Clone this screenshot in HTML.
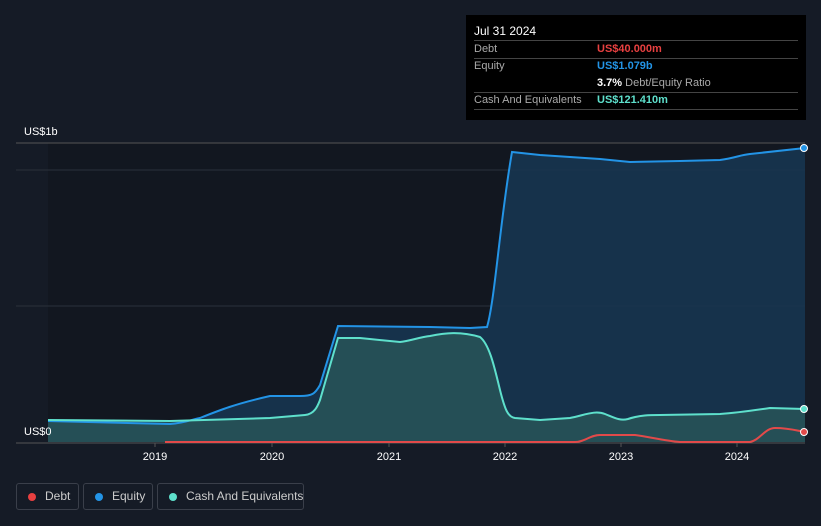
<!DOCTYPE html><html><head><style>
body{margin:0;background:#151b26;font-family:"Liberation Sans",sans-serif;width:821px;height:526px;overflow:hidden;position:relative}
.tt{position:absolute;left:466px;top:15px;width:340px;height:105px;background:#000;color:#fff;font-size:11px}
.row{position:absolute;left:8px;right:8px;height:17px;border-bottom:1px solid #444;line-height:17px}
.row span{position:absolute;left:123px;font-weight:bold}
.lg{position:absolute;top:483px;height:27px;border:1px solid #3a3f4a;border-radius:3px;color:#ccc;font-size:12px;line-height:25px;box-sizing:border-box;padding-left:28px;white-space:nowrap}
.lg i{position:absolute;left:11px;top:9px;width:8px;height:8px;border-radius:50%}
</style></head><body>
<svg width="821" height="526" style="position:absolute;left:0;top:0">
<rect x="48" y="143" width="757" height="299" fill="#121720"/>
<line x1="16" y1="143" x2="805" y2="143" stroke="#555" stroke-width="1"/>
<line x1="16" y1="170" x2="805" y2="170" stroke="#2a303b"/>
<line x1="16" y1="306" x2="805" y2="306" stroke="#2a303b"/>
<line x1="16" y1="443" x2="805" y2="443" stroke="#555"/>
<path d="M48,421 L170,424 C185,423 190,420 200,418 C220,410 235,404 270,396 L300,396 C312,396 315,394 320,385 L338,326 L430,327 L470,328 L487,327 C495,300 500,220 512,152 L540,155 L600,159 L630,162 L680,161 L720,160 C735,158 740,155 750,154 L805,148 L805,442 L48,442Z" fill="#173550" opacity="0.9"/>
<path d="M48,420 L170,421 L270,418 L305,415 C315,414 318,405 320,400 L338,338 L360,338 L400,342 C410,341 420,337 430,336 C445,333 460,331 480,337 C490,345 495,370 500,390 C505,410 508,417 515,418 L540,420 L570,418 C585,415 595,410 605,414 C615,418 620,421 628,419 C640,415 650,415 660,415 L720,414 C735,413 750,411 770,408 L805,409 L805,442 L48,442Z" fill="#2b5a5a" opacity="0.75"/>
<path d="M48,421 L170,424 C185,423 190,420 200,418 C220,410 235,404 270,396 L300,396 C312,396 315,394 320,385 L338,326 L430,327 L470,328 L487,327 C495,300 500,220 512,152 L540,155 L600,159 L630,162 L680,161 L720,160 C735,158 740,155 750,154 L805,148" fill="none" stroke="#2394e6" stroke-width="2"/>
<path d="M48,420 L170,421 L270,418 L305,415 C315,414 318,405 320,400 L338,338 L360,338 L400,342 C410,341 420,337 430,336 C445,333 460,331 480,337 C490,345 495,370 500,390 C505,410 508,417 515,418 L540,420 L570,418 C585,415 595,410 605,414 C615,418 620,421 628,419 C640,415 650,415 660,415 L720,414 C735,413 750,411 770,408 L805,409" fill="none" stroke="#5ee0cc" stroke-width="2"/>
<path d="M165,442 L575,442 C585,442 590,435 600,435 L635,435 C650,437 665,441 680,442 L750,442 C760,440 765,428 775,428 C790,428 798,431 805,432" fill="none" stroke="#e24a4a" stroke-width="2"/>
<circle cx="804" cy="148" r="3.5" fill="#2394e6" stroke="#fff" stroke-width="1"/>
<circle cx="804" cy="409" r="3.5" fill="#5ee0cc" stroke="#fff" stroke-width="1"/>
<circle cx="804" cy="432" r="3.5" fill="#e24a4a" stroke="#fff" stroke-width="1"/>
<g fill="#fff" font-size="11" text-anchor="middle"><text x="155" y="460">2019</text><text x="272" y="460">2020</text><text x="389" y="460">2021</text><text x="505" y="460">2022</text><text x="621" y="460">2023</text><text x="737" y="460">2024</text></g>
<g stroke="#555"><line x1="155" y1="443" x2="155" y2="447"/><line x1="272" y1="443" x2="272" y2="447"/><line x1="389" y1="443" x2="389" y2="447"/><line x1="505" y1="443" x2="505" y2="447"/><line x1="621" y1="443" x2="621" y2="447"/><line x1="737" y1="443" x2="737" y2="447"/></g>
<text x="24" y="135" fill="#fff" font-size="11">US$1b</text>
<text x="24" y="435" fill="#fff" font-size="11">US$0</text>
</svg>
<div class="tt">
<div style="position:absolute;left:8px;top:9px;font-size:12px">Jul 31 2024</div>
<div class="row" style="top:25px;border-top:1px solid #444;color:#aaa">Debt<span style="color:#e84040">US$40.000m</span></div>
<div class="row" style="top:43px;border-bottom:none;color:#aaa">Equity<span style="color:#2394e6">US$1.079b</span></div>
<div class="row" style="top:60px;color:#aaa"><span style="color:#fff">3.7% <b style="color:#aaa;font-weight:normal">Debt/Equity Ratio</b></span></div>
<div class="row" style="top:77px;color:#aaa">Cash And Equivalents<span style="color:#5ee0cc">US$121.410m</span></div>
</div>
<div class="lg" style="left:16px;width:63px"><i style="background:#e84040"></i>Debt</div>
<div class="lg" style="left:83px;width:70px"><i style="background:#2394e6"></i>Equity</div>
<div class="lg" style="left:157px;width:147px"><i style="background:#5ee0cc"></i>Cash And Equivalents</div>
</body></html>
